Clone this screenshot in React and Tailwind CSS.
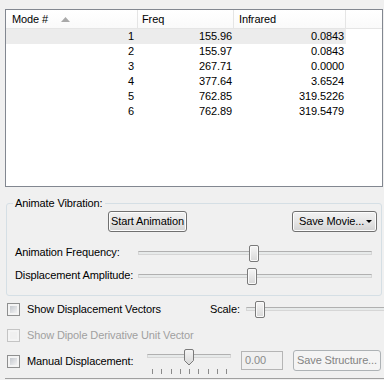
import React from 'react';

const rows = [
  { mode: 1, freq: '155.96', ir: '0.0843' },
  { mode: 2, freq: '155.97', ir: '0.0843' },
  { mode: 3, freq: '267.71', ir: '0.0000' },
  { mode: 4, freq: '377.64', ir: '3.6524' },
  { mode: 5, freq: '762.85', ir: '319.5226' },
  { mode: 6, freq: '762.89', ir: '319.5479' },
];

function Button({ children, className = '', disabled = false }) {
  return (
    <div
      className={`h-[21px] flex items-center justify-center rounded-[3px] border ${
        disabled
          ? 'border-[#adb2b5] bg-[#f4f4f4] text-[#838383]'
          : 'border-[#707070] bg-linear-to-b from-[#f2f2f2] via-[#e6e6e6] to-[#d3d3d3] text-black shadow-[inset_0_0_0_1px_#fcfcfc]'
      } ${className}`}
    >
      {children}
    </div>
  );
}

function Checkbox({ disabled = false }) {
  return (
    <div
      className={`w-[13px] h-[13px] border p-[2px] ${
        disabled ? 'border-[#c4c4c4] bg-[#f4f4f4]' : 'border-[#8e8f8f] bg-[#f4f4f4]'
      }`}
    >
      <div
        className={`w-full h-full ${
          disabled ? 'bg-[#f0f0f0]' : 'bg-linear-to-br from-[#c4c8ce] to-[#f2f2f2]'
        }`}
      />
    </div>
  );
}

function Thumb({ left }) {
  return (
    <div
      className="absolute top-[-7px] w-[10px] h-[17px] rounded-[2px] border border-[#7a7a7a] bg-linear-to-b from-[#f6f6f6] to-[#d8d8d8] shadow-[inset_0_0_0_1px_#fafafa]"
      style={{ left }}
    />
  );
}

function Track({ thumb, className = '' }) {
  return (
    <div className={`relative h-[4px] border border-[#d6d6d6] border-t-[#b0b0b0] bg-[#e7eaea] ${className}`}>
      <Thumb left={thumb} />
    </div>
  );
}

function SliderRow({ label, thumb }) {
  return (
    <div className="h-[23px] flex items-center">
      <div className="w-[131px] pl-[8px]">{label}</div>
      <Track thumb={thumb} className="w-[234px]" />
    </div>
  );
}

export default function App() {
  return (
    <div className="w-[384px] h-[380px] overflow-hidden bg-[#f0f0f0] text-[11px] leading-[13px] tracking-[-0.12px] text-black font-['Liberation_Sans',Arial,sans-serif] flex flex-col">
      {/* Mode list */}
      <div className="mt-[9px] ml-[5px] w-[378px] h-[178px] shrink-0 border border-[#828790] bg-white flex flex-col">
        <div className="h-[19px] flex border-b border-[#e5e5e5] bg-linear-to-b from-white to-[#fafafa]">
          <div className="w-[132px] border-r border-[#e5e5e5] pl-[6px] flex items-center">
            <span>Mode #</span>
            <svg width="9" height="5" className="ml-[13px]" viewBox="0 0 9 5">
              <path d="M4.5 0 L9 5 L0 5 Z" fill="#a9a9a9" />
            </svg>
          </div>
          <div className="w-[96px] border-r border-[#e5e5e5] pl-[4px] flex items-center">Freq</div>
          <div className="w-[112px] border-r border-[#e5e5e5] pl-[5px] flex items-center">Infrared</div>
          <div className="flex-1" />
        </div>
        {rows.map((r, i) => (
          <div
            key={r.mode}
            className={`w-[340px] h-[15px] flex items-center ${i === 0 ? 'bg-[#ececec]' : ''}`}
          >
            <div className="w-[132px] text-right pr-[4px]">{r.mode}</div>
            <div className="w-[96px] text-right pr-[2px]">{r.freq}</div>
            <div className="w-[112px] text-right pr-[2px]">{r.ir}</div>
          </div>
        ))}
      </div>

      {/* Animate Vibration group */}
      <div className="relative mt-[16px] ml-[6px] w-[376px] shrink-0 border border-[#d5dfe5] rounded-[3px] pt-[7px] pb-[8px]">
        <span className="absolute top-[-7px] left-[6px] px-[2px] bg-[#f0f0f0]">Animate Vibration:</span>
        <div className="flex">
          <Button className="ml-[101px] w-[79px]">Start Animation</Button>
          <Button className="ml-auto mr-[4px] w-[85px] justify-start pl-[6px]">
            <span>Save Movie...</span>
            <svg width="6" height="3" viewBox="0 0 6 3" className="ml-[2px]">
              <path d="M0 0 H6 L3 3 Z" fill="#000" />
            </svg>
          </Button>
        </div>
        <div className="mt-[9px]">
          <SliderRow label="Animation Frequency:" thumb={110} />
          <SliderRow label="Displacement Amplitude:" thumb={108} />
        </div>
      </div>

      {/* Options */}
      <div className="h-[26px] flex items-center pl-[7px] shrink-0">
        <Checkbox />
        <span className="ml-[7px] w-[183px]">Show Displacement Vectors</span>
        <span className="w-[36px]">Scale:</span>
        <Track thumb={8} className="flex-1 border-r-0" />
      </div>
      <div className="h-[26px] flex items-center pl-[7px] shrink-0">
        <Checkbox disabled />
        <span className="ml-[7px] text-[#a0a0a0]">Show Dipole Derivative Unit Vector</span>
      </div>
      <div className="h-[29px] flex items-start pl-[7px] shrink-0">
        <div className="mt-[7px]">
          <Checkbox />
        </div>
        <span className="mt-[7px] ml-[7px] w-[120px]">Manual Displacement:</span>
        <div className="relative w-[84px] h-[28px]">
          <div className="mt-[6px] h-[4px] border border-[#d6d6d6] border-t-[#b0b0b0] bg-[#e7eaea]" />
          <svg width="10" height="17" viewBox="0 0 10 17" className="absolute top-[1px] left-[37px]">
            <defs>
              <linearGradient id="tg" x1="0" y1="0" x2="0" y2="1">
                <stop offset="0" stopColor="#f6f6f6" />
                <stop offset="1" stopColor="#d6d6d6" />
              </linearGradient>
            </defs>
            <path d="M0.5 2 Q0.5 0.5 2 0.5 H8 Q9.5 0.5 9.5 2 V11.5 L5 16 L0.5 11.5 Z" fill="url(#tg)" stroke="#7a7a7a" />
          </svg>
          <div className="mt-[11px] ml-[5px] w-[75px] flex justify-between">
            {Array.from({ length: 9 }).map((_, i) => (
              <div key={i} className="w-[1px] h-[5px] bg-[#8a8a8a]" />
            ))}
          </div>
        </div>
        <div className="mt-[3px] ml-[10px] w-[42px] h-[19px] border border-[#b5b5b5] bg-[#f0f0f0] text-[#8a8a8a] pl-[3px] flex items-center">
          0.00
        </div>
        <Button disabled className="mt-[2px] ml-[10px] w-[88px]">
          Save Structure...
        </Button>
      </div>
      <div className="mt-[1px] ml-[5px] h-[1px] bg-[#a0a0a0] shrink-0" />
    </div>
  );
}
